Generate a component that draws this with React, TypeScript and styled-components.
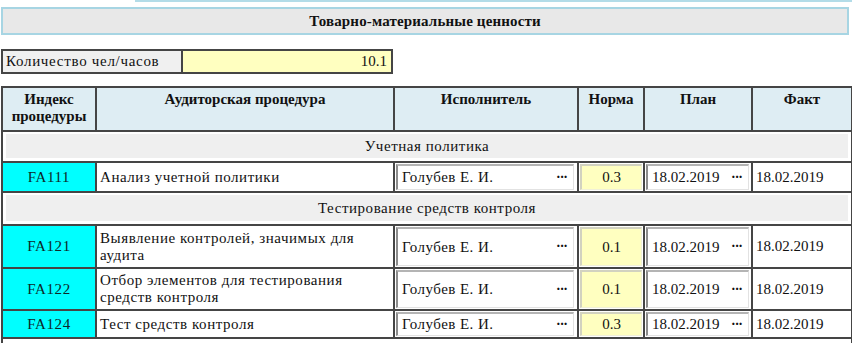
import React from "react";
import styled, { createGlobalStyle } from "styled-components";

const SERIF = `"Liberation Serif", "Tinos", "Times New Roman", serif`;

const GlobalStyle = createGlobalStyle`
  html, body {
    margin: 0;
    padding: 0;
    overflow: hidden;
    background: #ffffff;
  }
  body {
    font-family: ${SERIF};
    font-size: 15px;
    color: #111111;
  }
  table, th, td {
    font-family: ${SERIF};
  }
`;

const Page = styled.div`
  width: 852px;
  display: flex;
  flex-direction: column;
  font-family: ${SERIF};
`;

const TopStrip = styled.div`
  height: 2px;
  margin-left: 135px;
  background: #b3dce8;
`;

const TitleBar = styled.div`
  box-sizing: border-box;
  margin: 5px 3px 0 1px;
  height: 28px;
  border: 2px solid #a7d5e3;
  background: #e8e8e8;
  display: flex;
  align-items: center;
  justify-content: center;
  font-weight: bold;
  font-size: 15px;
  letter-spacing: 0.15px;
`;

const QtyRow = styled.div`
  box-sizing: border-box;
  margin: 14px 0 0 1px;
  width: 392px;
  height: 25px;
  display: grid;
  grid-template-columns: 180px 1fr;
  border: 2px solid #454545;
`;

const QtyLabel = styled.div`
  background: #f0f0f0;
  border-right: 2px solid #454545;
  display: flex;
  align-items: center;
  padding-left: 3px;
  letter-spacing: 0.7px;
`;

const QtyValue = styled.div`
  background: #ffffc0;
  display: flex;
  align-items: center;
  justify-content: flex-end;
  padding-right: 4px;
`;

const Table = styled.table`
  margin: 12px 0 0 1px;
  width: 850px;
  border-collapse: collapse;
  table-layout: fixed;
  font-size: 15px;
  font-family: ${SERIF};
`;

const Th = styled.th`
  border: 2px solid #454545;
  background: #deedf3;
  font-weight: bold;
  vertical-align: top;
  text-align: center;
  padding: 3px 2px 0;
  line-height: 17px;
  height: 39px;
`;

const SectionCell = styled.td<{ $h: number }>`
  border: 2px solid #454545;
  padding: 2px 3px 3px;
  height: ${(p) => p.$h - 7}px;
  background: #ffffff;
`;

const SectionInner = styled.div<{ $h: number }>`
  height: ${(p) => p.$h - 7}px;
  background: #efefef;
  display: flex;
  align-items: center;
  justify-content: center;
  letter-spacing: 0.55px;
`;

const CodeCell = styled.td`
  border: 2px solid #454545;
  background: #00ffff;
  color: #0d2828;
  text-align: center;
  vertical-align: middle;
  padding: 0;
  letter-spacing: 0.6px;
`;

const NameCell = styled.td`
  border: 2px solid #454545;
  background: #ffffff;
  vertical-align: middle;
  padding: 0 12px 0 3px;
  line-height: 17px;
  letter-spacing: 0.55px;
`;

const BoxCell = styled.td<{ $pr: number }>`
  border: 2px solid #454545;
  background: #ffffff;
  vertical-align: middle;
  padding: 1px ${(p) => p.$pr}px 1px 1px;
`;

const FieldBox = styled.div<{ $h: number; $ls: number }>`
  box-sizing: border-box;
  height: ${(p) => p.$h}px;
  display: flex;
  align-items: center;
  justify-content: space-between;
  padding: 0 6px 0 4px;
  background: #ffffff;
  letter-spacing: ${(p) => p.$ls}px;
  border-top: 2px solid #b4b4b4;
  border-left: 2px solid #8c8c8c;
  border-right: 1px solid #e2e2e2;
  border-bottom: 1px solid #e2e2e2;
`;

const NormBox = styled.div<{ $h: number }>`
  box-sizing: border-box;
  height: ${(p) => p.$h}px;
  display: flex;
  align-items: center;
  justify-content: center;
  background: #ffffc0;
  border-top: 2px solid #d2d2c0;
  border-left: 2px solid #d2d2c0;
  border-right: 1px solid #f0f0d8;
  border-bottom: 1px solid #f0f0d8;
`;

const Dots = styled.span`
  font-weight: bold;
  letter-spacing: -1px;
  font-size: 14px;
`;

const FactCell = styled.td`
  border: 2px solid #454545;
  background: #ffffff;
  vertical-align: middle;
  padding: 0 0 0 3px;
`;

const BlankCell = styled.td`
  border: 2px solid #454545;
  border-bottom: none;
  height: 26px;
  background: #ffffff;
`;

type Row =
  | { type: "section"; title: string; h: number }
  | { type: "item"; code: string; name: string; norm: string; h: number };

const rows: Row[] = [
  { type: "section", title: "Учетная политика", h: 31 },
  { type: "item", code: "FA111", name: "Анализ учетной политики", norm: "0.3", h: 29 },
  { type: "section", title: "Тестирование средств контроля", h: 33 },
  { type: "item", code: "FA121", name: "Выявление контролей, значимых для аудита", norm: "0.1", h: 42 },
  { type: "item", code: "FA122", name: "Отбор элементов для тестирования средств контроля", norm: "0.1", h: 41 },
  { type: "item", code: "FA124", name: "Тест средств контроля", norm: "0.3", h: 27 },
];

export default function App() {
  return (
    <>
      <GlobalStyle />
      <Page>
        <TopStrip />
        <TitleBar>Товарно-материальные ценности</TitleBar>
        <QtyRow>
          <QtyLabel>Количество чел/часов</QtyLabel>
          <QtyValue>10.1</QtyValue>
        </QtyRow>
        <Table>
          <colgroup>
            <col style={{ width: 94 }} />
            <col style={{ width: 298 }} />
            <col style={{ width: 184 }} />
            <col style={{ width: 66 }} />
            <col style={{ width: 108 }} />
            <col style={{ width: 100 }} />
          </colgroup>
          <thead>
            <tr>
              <Th>
                Индекс
                <br />
                процедуры
              </Th>
              <Th>Аудиторская процедура</Th>
              <Th>Исполнитель</Th>
              <Th>Норма</Th>
              <Th>План</Th>
              <Th>Факт</Th>
            </tr>
          </thead>
          <tbody>
            {rows.map((r, i) =>
              r.type === "section" ? (
                <tr key={i}>
                  <SectionCell colSpan={6} $h={r.h}>
                    <SectionInner $h={r.h}>{r.title}</SectionInner>
                  </SectionCell>
                </tr>
              ) : (
                <tr key={i} style={{ height: r.h }}>
                  <CodeCell>{r.code}</CodeCell>
                  <NameCell>{r.name}</NameCell>
                  <BoxCell $pr={3}>
                    <FieldBox $h={r.h - 3} $ls={0.45}>
                      <span>Голубев Е. И.</span>
                      <Dots>···</Dots>
                    </FieldBox>
                  </BoxCell>
                  <BoxCell $pr={1}>
                    <NormBox $h={r.h - 3}>{r.norm}</NormBox>
                  </BoxCell>
                  <BoxCell $pr={2}>
                    <FieldBox $h={r.h - 3} $ls={0}>
                      <span>18.02.2019</span>
                      <Dots>···</Dots>
                    </FieldBox>
                  </BoxCell>
                  <FactCell>18.02.2019</FactCell>
                </tr>
              )
            )}
            <tr>
              <BlankCell colSpan={6} />
            </tr>
          </tbody>
        </Table>
      </Page>
    </>
  );
}
